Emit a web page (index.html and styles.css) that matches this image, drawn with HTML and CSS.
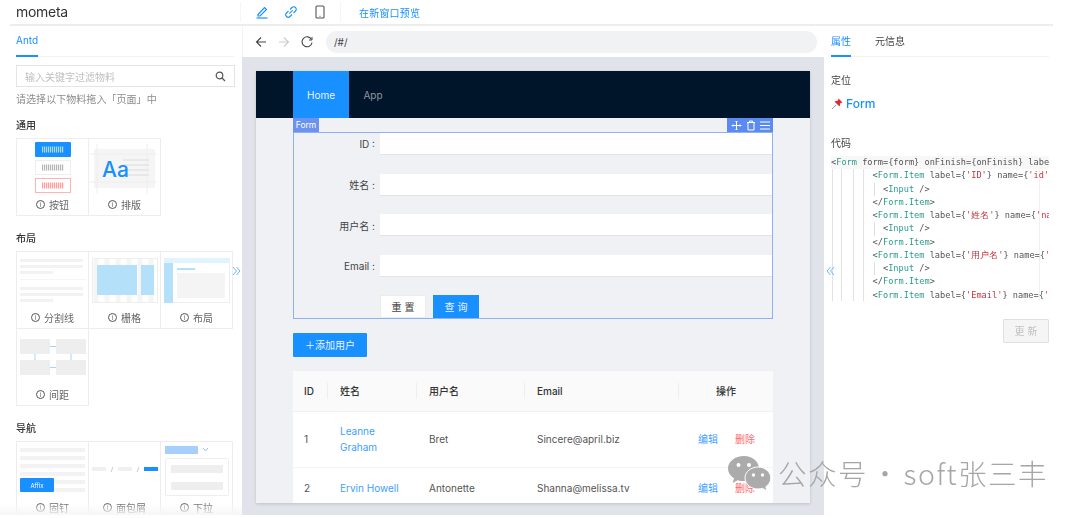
FILE: index.html
```html
<!DOCTYPE html>
<html lang="zh">
<head>
<meta charset="utf-8">
<title>mometa</title>
<link rel="stylesheet" href="styles.css">
</head>
<body>
<div class="app">
  <header class="header">
    <div class="logo">mometa</div>
    <div class="tools">
      <svg class="tool" width="14" height="14" viewBox="0 0 14 14" fill="none" stroke="#1890ff" stroke-width="1.200"><path d="M3 9.500 9.500 2.500l2 2L5 11H3z"/><path d="M1.500 13h11"/></svg>
      <svg class="tool" width="14" height="14" viewBox="0 0 14 14" fill="none" stroke="#1890ff" stroke-width="1.100"><path d="M6 4.500 8 2.500a2.400 2.400 0 0 1 3.500 3.500L9.500 8"/><path d="M8 9.500 6 11.500A2.400 2.400 0 0 1 2.500 8L4.500 6"/><path d="M5.300 8.700 8.700 5.300"/></svg>
      <svg class="tool" width="14" height="14" viewBox="0 0 14 14" fill="none" stroke="#555" stroke-width="1.100"><rect x="3" y="1" width="8" height="12" rx="1"/><path d="M6.500 11.300h1"/></svg>
    </div>
    <div class="preview-link">在新窗口预览</div>
  </header>
  <div class="header-rule"></div>
  <main class="main">
    <aside class="left">
      <div class="tabs"><span class="tab active">Antd</span></div>
      <div class="search"><span>输入关键字过滤物料</span>
        <svg width="11" height="11" viewBox="0 0 11 11" fill="none" stroke="#555" stroke-width="1.200"><circle cx="4.500" cy="4.500" r="3.300"/><path d="m7 7 3 3"/></svg>
      </div>
      <p class="hint">请选择以下物料拖入「页面」中</p>

      <h3 class="group-title">通用</h3>
      <div class="grid">
        <div class="cell">
          <svg class="thumb" viewBox="0 0 72 56">
            <rect x="18" y="3" width="36" height="15" rx="1" fill="#1890ff"/><path d="M25 10.500h22" stroke="#a9d8fd" stroke-width="6" stroke-dasharray="1.200 .8"/>
            <rect x="18.500" y="21.500" width="35" height="14" fill="#fff" stroke="#eee"/><path d="M25 28.500h22" stroke="#b5b5b5" stroke-width="6" stroke-dasharray="1.200 .8"/>
            <rect x="18.500" y="39.500" width="35" height="14" fill="#fff" stroke="#ffb3b3"/><path d="M25 46.500h22" stroke="#ff9d9d" stroke-width="6" stroke-dasharray="1.200 .8"/>
          </svg>
          <div class="cap"><i class="info">i</i>按钮</div>
        </div>
        <div class="cell">
          <svg class="thumb" viewBox="0 0 72 56">
            <rect x="5" y="10" width="61" height="39" fill="#f5f5f5"/>
            <path d="M1 15h67M1 43h67M8 5v50M58 5v50" stroke="#eee"/>
            <path d="M34 21h26M34 26h26M34 31h26M34 36h26" stroke="#e8e8e8" stroke-width="2"/>
            <text class="thumb-aa" x="13" y="38">Aa</text>
          </svg>
          <div class="cap"><i class="info">i</i>排版</div>
        </div>
      </div>

      <h3 class="group-title">布局</h3>
      <div class="grid">
        <div class="cell">
          <svg class="thumb" viewBox="0 0 72 56" fill="#f2f2f2">
            <rect x="3" y="7" width="63" height="3"/><rect x="3" y="13" width="63" height="3"/><rect x="3" y="19" width="33" height="3"/>
            <rect x="3" y="27" width="66" height="1" fill="#f6f6f6"/>
            <rect x="3" y="35" width="63" height="3"/><rect x="3" y="41" width="63" height="3"/><rect x="3" y="47" width="33" height="3"/>
          </svg>
          <div class="cap"><i class="info">i</i>分割线</div>
        </div>
        <div class="cell">
          <svg class="thumb" viewBox="0 0 72 56">
            <rect x="3.500" y="6.500" width="65" height="44" fill="#fff" stroke="#eee"/>
            <path d="M7 7v43M18 7v43M29 7v43M40 7v43M51 7v43M62 7v43" stroke="#f5f5f5" stroke-width="5"/>
            <rect x="8" y="13" width="40" height="30" fill="#b5e0fa"/><rect x="52" y="13" width="13" height="30" fill="#b5e0fa"/>
          </svg>
          <div class="cap"><i class="info">i</i>栅格</div>
        </div>
        <div class="cell">
          <svg class="thumb" viewBox="0 0 72 56">
            <rect x="3.500" y="6.500" width="65" height="44" fill="#fff" stroke="#eee"/>
            <rect x="3" y="6" width="66" height="5" fill="#e0f4fd"/><rect x="3" y="11" width="9" height="40" fill="#b5e0fa"/>
            <rect x="16" y="16" width="18" height="2" fill="#b5e0fa"/><rect x="16" y="21" width="48" height="25" fill="#f4f4f4"/>
          </svg>
          <div class="cap"><i class="info">i</i>布局</div>
        </div>
        <div class="cell">
          <svg class="thumb" viewBox="0 0 72 56">
            <g fill="#eee"><rect x="3" y="10" width="30" height="15"/><rect x="39" y="10" width="30" height="15"/><rect x="3" y="31" width="30" height="15"/><rect x="39" y="31" width="30" height="15"/></g>
            <path d="M33 17.500h6M33 38.500h6M18 25v6M54 25v6" stroke="#a6d4fa"/>
          </svg>
          <div class="cap"><i class="info">i</i>间距</div>
        </div>
      </div>

      <h3 class="group-title">导航</h3>
      <div class="grid">
        <div class="cell">
          <svg class="thumb" viewBox="0 0 72 56" fill="#f3f3f3">
            <rect x="3" y="6" width="65" height="4"/><rect x="3" y="14" width="65" height="4"/><rect x="3" y="22" width="65" height="4"/><rect x="3" y="30" width="65" height="4"/><rect x="3" y="38" width="65" height="4"/><rect x="3" y="46" width="65" height="4"/>
            <rect x="3" y="36" width="34" height="14" rx="1" fill="#1890ff"/>
            <text class="thumb-affix" x="20" y="45.500">Affix</text>
          </svg>
          <div class="cap"><i class="info">i</i>固钉</div>
        </div>
        <div class="cell">
          <svg class="thumb" viewBox="0 0 72 56">
            <rect x="3" y="25" width="14" height="4" fill="#f0f0f0"/><rect x="29" y="25" width="14" height="4" fill="#f0f0f0"/><rect x="55" y="25" width="14" height="4" fill="#1890ff"/>
            <path d="m22 30 2-5M48 30l2-5" stroke="#ccc" fill="none"/>
          </svg>
          <div class="cap"><i class="info">i</i>面包屑</div>
        </div>
        <div class="cell">
          <svg class="thumb" viewBox="0 0 72 56">
            <rect x="4" y="4" width="33" height="8" fill="#a6d0fb"/><path d="m42 6 2.500 3L47 6" fill="none" stroke="#8fc4f8"/>
            <rect x="4.500" y="16.500" width="63" height="37" fill="#fff" stroke="#eee" rx="1"/>
            <rect x="10" y="23" width="52" height="8" fill="#eee"/><rect x="10" y="40" width="52" height="8" fill="#eee"/>
          </svg>
          <div class="cap"><i class="info">i</i>下拉</div>
        </div>
      </div>
      <svg class="collapse collapse-left" width="9" height="10" viewBox="0 0 9 10" fill="none" stroke="#69b4ff"><path d="m1 1 3.500 4L1 9M4.500 1 8 5 4.500 9"/></svg>
      <div class="fade"></div>
    </aside>

    <section class="center">
      <div class="browserbar">
        <svg width="12" height="12" viewBox="0 0 12 12" fill="none" stroke="#444" stroke-width="1.100"><path d="M11 6H1.500M6 1.500 1.500 6 6 10.500"/></svg>
        <svg width="12" height="12" viewBox="0 0 12 12" fill="none" stroke="#ccc" stroke-width="1.100"><path d="M1 6h9.500M6 1.500 10.500 6 6 10.500"/></svg>
        <svg width="12" height="12" viewBox="0 0 12 12" fill="none" stroke="#444" stroke-width="1.100"><path d="M10.500 3.500A5 5 0 1 0 11 6.500"/><path d="M11 1v3H8" stroke-width="1"/></svg>
        <div class="urlbar">/#/</div>
      </div>
      <div class="canvas">
        <div class="card">
          <nav class="nav"><span class="nav-item active">Home</span><span class="nav-item">App</span></nav>
          <div class="content">
            <div class="tagrow">
              <span class="form-tag">Form</span>
              <span class="form-actions">
                <svg width="11" height="11" viewBox="0 0 11 11" fill="none" stroke="#fff"><path d="M5.500 1v9M1 5.500h9M4.500 2l1-1 1 1M4.500 9l1 1 1-1M2 4.500l-1 1 1 1M9 4.500l1 1-1 1"/></svg>
                <svg width="10" height="11" viewBox="0 0 10 11" fill="none" stroke="#fff"><path d="M1 2.500h8M2 2.500V10h6V2.500M3.500 2.500V1h3v1.500"/></svg>
                <svg width="10" height="11" viewBox="0 0 10 11" fill="none" stroke="#fff"><path d="M0 2h10M0 5.500h10M0 9h10"/></svg>
              </span>
            </div>
            <form class="form">
              <div class="form-row"><label class="form-label">ID :</label><div class="input"></div></div>
              <div class="form-row"><label class="form-label">姓名 :</label><div class="input"></div></div>
              <div class="form-row"><label class="form-label">用户名 :</label><div class="input"></div></div>
              <div class="form-row"><label class="form-label">Email :</label><div class="input"></div></div>
              <div class="form-btns"><span class="btn btn-plain">重 置</span><span class="btn btn-primary">查 询</span></div>
            </form>
            <div class="add-btn">＋添加用户</div>
            <table class="table">
              <thead><tr><th class="c-id">ID</th><th class="c-name">姓名</th><th class="c-user">用户名</th><th class="c-mail">Email</th><th class="c-op">操作</th></tr></thead>
              <tbody>
                <tr class="row-tall"><td>1</td><td><a class="link">Leanne Graham</a></td><td>Bret</td><td>Sincere@april.biz</td><td class="ops"><a class="link">编辑</a><a class="danger">删除</a></td></tr>
                <tr class="row-short"><td>2</td><td><a class="link">Ervin Howell</a></td><td>Antonette</td><td>Shanna@melissa.tv</td><td class="ops"><a class="link">编辑</a><a class="danger">删除</a></td></tr>
              </tbody>
            </table>
          </div>
        </div>
      </div>
    </section>

    <aside class="right">
      <div class="tabs tabs-right"><span class="tab active">属性</span><span class="tab">元信息</span></div>
      <h4 class="side-title first">定位</h4>
      <div class="locator">
        <svg width="13" height="13" viewBox="0 0 13 13"><path d="m1 12 4-4" stroke="#999"/><path d="M7.500 1.500 11.500 5.500 9.500 6 8.500 9.500 3.500 4.500 7 3.500z" fill="#e0282e"/></svg>
        <span>Form</span>
      </div>
      <h4 class="side-title second">代码</h4>
<pre class="code"><span class="ln ln-first"><b>&lt;</b><u>Form</u> form={form} onFinish={onFinish} labelCol</span>
<span class="ln">        <b>&lt;</b><u>Form.Item</u> label={<s>'ID'</s>} name={<s>'id'</s>}&gt;</span>
<span class="ln ln-inner">          <b>&lt;</b><u>Input</u> /&gt;</span>
<span class="ln">        <b>&lt;/</b><u>Form.Item</u>&gt;</span>
<span class="ln">        <b>&lt;</b><u>Form.Item</u> label={<s>'姓名'</s>} name={<s>'name'</s>}&gt;</span>
<span class="ln ln-inner">          <b>&lt;</b><u>Input</u> /&gt;</span>
<span class="ln">        <b>&lt;/</b><u>Form.Item</u>&gt;</span>
<span class="ln">        <b>&lt;</b><u>Form.Item</u> label={<s>'用户名'</s>} name={<s>'username'</s>}&gt;</span>
<span class="ln ln-inner">          <b>&lt;</b><u>Input</u> /&gt;</span>
<span class="ln">        <b>&lt;/</b><u>Form.Item</u>&gt;</span>
<span class="ln">        <b>&lt;</b><u>Form.Item</u> label={<s>'Email'</s>} name={<s>'email'</s>}&gt;</span></pre>
      <div class="update-row"><span class="update">更 新</span></div>
      <svg class="collapse collapse-right" width="9" height="10" viewBox="0 0 9 10" fill="none" stroke="#69b4ff"><path d="M8 1 4.500 5 8 9M4.500 1 1 5l3.500 4"/></svg>
    </aside>
  </main>

  <div class="watermark">
    <svg width="44" height="36" viewBox="0 0 44 36">
      <path d="M17 1C8 1 1 6.500 1 13.500c0 4 2.300 7.500 6 9.800L5.500 28l5.200-2.800c2 .6 4.100.9 6.300.9 8.500 0 15-5.700 15-12.600S25.500 1 17 1z" fill="#ababab"/>
      <circle cx="11.500" cy="10" r="2" fill="#fff"/><circle cx="22" cy="10" r="2" fill="#fff"/>
      <path d="M31 12c-7 0-13 4.800-13 11s6 11 13 11c1.600 0 3-.2 4.400-.7L40 36l-1.200-4.200c3-2 5-5.100 5-8.800 0-6.200-6-11-12.800-11z" fill="#ababab" stroke="#fff" stroke-width="1"/>
      <circle cx="26.500" cy="20" r="1.700" fill="#fff"/><circle cx="35.500" cy="20" r="1.700" fill="#fff"/>
    </svg>
    <span class="wm-text">公众号 · soft张三丰</span>
  </div>
</div>
</body>
</html>
```

FILE: styles.css
```css
* { box-sizing: border-box; }
html, body { margin: 0; padding: 0; background: #fff; overflow: hidden; }
body { width: 1080px; height: 518px; font-family: Inter, "Noto Sans CJK SC", sans-serif; font-size: 10px; color: #444; }
.app { position: relative; width: 1053px; height: 515px; display: flex; flex-direction: column; }

.header { height: 24px; display: flex; align-items: center; filter: blur(.3px); }
.logo { width: 241px; padding-left: 16px; font-size: 14px; color: #333; letter-spacing: -.3px; border-right: 1px solid #f5f5f5; line-height: 20px; }
.tools { display: flex; align-items: center; gap: 15px; padding-left: 14px; width: 100px; height: 20px; border-right: 1px solid #f5f5f5; }
.preview-link { margin-left: 18px; font-size: 10px; color: #1890ff; letter-spacing: .2px; }
.header-rule { height: 2px; margin-left: 10px; background: #ededed; }

.main { flex: 1; min-height: 0; display: flex; filter: blur(.4px); }
.left { position: relative; width: 242px; flex: none; padding-left: 16px; overflow: hidden; }
.tabs { height: 31px; width: 218px; display: flex; gap: 24px; align-items: stretch; border-bottom: 1px solid #f2f2f2; }
.tab { display: flex; align-items: center; color: #444; font-size: 10px; height: 31px; padding-bottom: 1px; border-bottom: 2px solid transparent; }
.tab.active { color: #1890ff; border-bottom-color: #1890ff; }
.search { margin-top: 8px; width: 219px; height: 22px; border: 1px solid #e4e4e4; display: flex; align-items: center; justify-content: space-between; padding: 0 8px; color: #bfbfbf; }
.hint { margin: 5px 0 0; line-height: 14px; color: #8c8c8c; letter-spacing: .05px; }
.group-title { margin: 16px 0 6px; font-size: 10px; line-height: 14px; font-weight: 500; color: #333; }
.hint + .group-title { margin-top: 12px; }
.grid { display: grid; grid-template-columns: repeat(3, 72px); grid-auto-rows: 77px; }
.cell { margin: 0 -1px -1px 0; border: 1px solid #f0ecee; display: flex; flex-direction: column; align-items: center; }
.thumb { display: block; width: 72px; height: 56px; flex: none; }
.thumb-aa { font-size: 21px; font-family: Inter, sans-serif; font-weight: 500; fill: #1890ff; }
.thumb-affix { font-size: 6px; fill: #fff; text-anchor: middle; }
.cap { display: flex; align-items: center; gap: 4px; height: 19px; color: #666; font-size: 10px; }
.info { width: 9px; height: 9px; border: 1px solid #555; border-radius: 50%; font-size: 6px; line-height: 7px; text-align: center; font-style: normal; color: #555; }
.collapse { position: absolute; }
.collapse-left { left: 232px; top: 240px; }
.fade { position: absolute; left: 0; right: 0; bottom: 0; height: 12px; background: linear-gradient(rgba(255,255,255,0), #f6f6f6); }

.center { width: 582px; flex: none; display: flex; flex-direction: column; }
.browserbar { height: 31px; display: flex; align-items: center; gap: 11px; padding: 0 7px 0 12px; border-left: 1px solid #f3f3f3; }
.urlbar { flex: 1; height: 22px; margin-left: 2px; border-radius: 11px; background: #f1f2f4; padding-left: 8px; line-height: 22px; color: #444; font-size: 10px; }
.canvas { flex: 1; min-height: 0; background: #e0e3ea; padding: 14px 14px 12px; }
.card { height: 432px; background: #eff1f5; box-shadow: 0 1px 3px rgba(0,0,0,.15); overflow: hidden; }
.nav { height: 47px; background: #001529; padding-left: 37px; display: flex; }
.nav-item { display: flex; align-items: center; justify-content: center; width: 56px; color: #8b97a3; font-size: 10px; }
.nav-item.active { background: #1890ff; color: #e8f4ff; }
.nav-item + .nav-item { width: 48px; }
.content { width: 480px; margin-left: 37px; }

.tagrow { height: 14px; display: flex; justify-content: space-between; }
.form-tag { width: 26px; height: 14px; background: #6a92ee; color: #fff; font-size: 8.500px; line-height: 14px; text-align: center; }
.form-actions { width: 46px; height: 14px; background: #5b8bf0; display: flex; align-items: center; justify-content: center; gap: 4px; }
.form { display: block; height: 187px; border: 1px solid #8fb1f3; }
.form-row { display: flex; align-items: center; height: 22px; margin-bottom: 18.700px; }
.form-label { width: 86px; padding-right: 5px; text-align: right; color: #444; font-size: 10px; }
.input { flex: 1; height: 22px; background: #fff; border-bottom: 1px solid #e4e4e4; }
.form-btns { display: flex; gap: 7px; margin-left: 86px; margin-top: -.500px; }
.btn { width: 46px; height: 23px; display: flex; align-items: center; justify-content: center; font-size: 10px; }
.btn-plain { background: #fff; border: 1px solid #ececec; color: #444; }
.btn-primary { background: #1890ff; color: #eaf5ff; }
.add-btn { width: 74px; height: 24px; margin-top: 14px; background: #1890ff; color: #eaf5ff; border-radius: 1px; line-height: 24px; text-align: center; font-size: 10px; white-space: nowrap; }

.table { width: 480px; margin-top: 14px; border-collapse: collapse; table-layout: fixed; background: #fff; }
.table th { position: relative; height: 40px; background: #fafafa; font-weight: 500; text-align: left; padding: 0 0 0 12px; color: #333; border-bottom: 1px solid #f2f2f2; }
.table th::after { content: ""; position: absolute; right: 0; top: 12px; height: 16px; width: 1px; background: #eee; }
.table th.c-op::after { display: none; }
.table th.c-id { padding-left: 11px; width: 35px; }
.c-name { width: 89px; }
.c-user { width: 108px; }
.c-mail { width: 154px; }
.table th.c-op { text-align: center; padding: 0; }
.table td { padding: 0 12px 0 12px; color: #555; line-height: 16px; border-bottom: 1px solid #f5f5f5; }
.table td:first-child { padding-left: 11px; }
.row-tall { height: 56px; }
.row-short { height: 42px; }
.link { color: #40a0ff; }
.danger { color: #ff6a6e; }
.table td.ops { padding: 0 0 0 19px; white-space: nowrap; }
.ops .danger { margin-left: 17px; }

.right { position: relative; width: 229px; flex: none; padding: 0 4px 0 7px; overflow: hidden; }
.tabs-right { width: 218px; }
.tabs-right .tab { width: auto; }
.side-title { margin: 0; font-size: 10px; line-height: 14px; font-weight: 400; color: #444; }
.side-title.first { margin-top: 16px; }
.side-title.second { margin-top: 25px; }
.locator { display: flex; align-items: center; gap: 2px; height: 16px; margin-top: 8px; color: #1890ff; font-size: 12px; font-weight: 500; }
.code { position: relative; margin: 6px 0 0; width: 218px; height: 145px; overflow: hidden; font-family: "DejaVu Sans Mono", monospace; font-size: 8.650px; line-height: 13.250px; color: #555;
  background-image: linear-gradient(#e2e2e2, #e2e2e2), linear-gradient(#e2e2e2, #e2e2e2), linear-gradient(#e2e2e2, #e2e2e2), linear-gradient(#e2e2e2, #e2e2e2), linear-gradient(#f0f0f0, #f0f0f0);
  background-size: 1px 100%; background-repeat: no-repeat; background-position: 1px 13px, 10px 13px, 22px 13px, 32px 13px, 208px 13px; }
.ln { display: inline-block; width: 300px; height: 13.250px; vertical-align: top; }
.ln-first { background: #f7f7f7; }
.ln-inner { background: linear-gradient(#ddd, #ddd) 43px 0 / 1px 100% no-repeat; }
.code b { font-weight: 400; color: #555; }
.code u { text-decoration: none; color: #2a9d8f; }
.code s { text-decoration: none; color: #c8323c; }
.update-row { display: flex; justify-content: flex-end; margin-top: 18px; }
.update { width: 46px; height: 24px; background: #f5f5f5; border: 1px solid #e0e0e0; border-radius: 1px; color: #bfbfbf; line-height: 22px; text-align: center; }
.collapse-right { left: 2px; top: 240px; }

.watermark { position: absolute; left: 727px; top: 455px; display: flex; align-items: center; gap: 7px; }
.wm-text { font-family: "Noto Sans CJK SC", sans-serif; font-size: 28.500px; font-weight: 300; line-height: 36px; color: #a6a6a6; letter-spacing: 1.500px; word-spacing: -5px; white-space: nowrap; }
```
